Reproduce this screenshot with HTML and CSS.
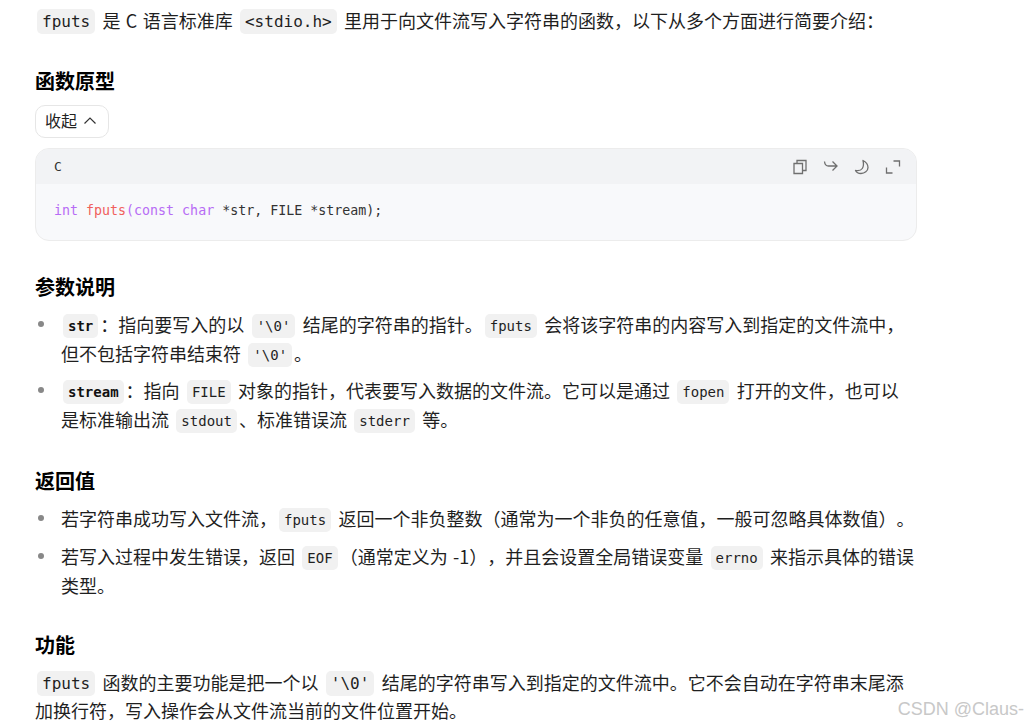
FILE: index.html
```html
<!DOCTYPE html>
<html lang="zh">
<head>
<meta charset="utf-8">
<title>fputs</title>
<link rel="stylesheet" href="styles.css">
</head>
<body>
<main class="doc">
<p class="para"><code>fputs</code> 是 C 语言标准库 <code>&lt;stdio.h&gt;</code> 里用于向文件流写入字符串的函数，以下从多个方面进行简要介绍：</p>
<h2 class="head">函数原型</h2>
<button class="collapse">收起<svg class="chev" viewBox="0 0 14 14" width="14" height="14"><path d="M1.500 9.500 7 4l5.500 5.500" fill="none" stroke="#333" stroke-width="1.200"/></svg></button>
<section class="codeblock">
<div class="codebar">
<span class="lang">C</span>
<div class="tools">
<svg viewBox="0 0 16 16" width="16" height="16"><path d="M2 4.500h8.500v10H2z M5 4.500V1.500h9v10h-3.500" fill="none" stroke="#6f6f6f" stroke-width="1.300"/></svg>
<svg viewBox="0 0 16 16" width="16" height="16"><path d="M1.500 2.500c.3 3 1.700 4.500 4 4.500h8.500M9.500 2.500 14 7l-4.500 4.500" fill="none" stroke="#6f6f6f" stroke-width="1.300"/></svg>
<svg viewBox="0 0 16 16" width="16" height="16"><path d="M9 1.500c3 1.500 5 4.500 5 7 0 3.500-3.500 6-7 6-2.500 0-4.500-1-5.500-3 3 .5 5.500 0 6.800-2C9.700 7.500 9.700 4.500 9 1.500z" fill="none" stroke="#6f6f6f" stroke-width="1.300" stroke-linejoin="round"/></svg>
<svg viewBox="0 0 16 16" width="16" height="16"><path d="M8.500 2h6v5.500M1.500 8.500V14h6" fill="none" stroke="#6f6f6f" stroke-width="1.300"/></svg>
</div>
</div>
<pre class="codebody"><span class="kw">int</span> <span class="fn">fputs</span><span class="kw">(const char</span> *str, FILE *stream);</pre>
</section>
<h2 class="head">参数说明</h2>
<ul class="list params">
<li><code class="strong">str</code>：指向要写入的以 <code>'\0'</code> 结尾的字符串的指针。<code>fputs</code> 会将该字符串的内容写入到指定的文件流中，但不包括字符串结束符 <code>'\0'</code>。</li>
<li><code class="strong">stream</code>：指向 <code>FILE</code> 对象的指针，代表要写入数据的文件流。它可以是通过 <code>fopen</code> 打开的文件，也可以是标准输出流 <code>stdout</code>、标准错误流 <code>stderr</code> 等。</li>
</ul>
<h2 class="head">返回值</h2>
<ul class="list">
<li>若字符串成功写入文件流，<code>fputs</code> 返回一个非负整数（通常为一个非负的任意值，一般可忽略具体数值）。</li>
<li>若写入过程中发生错误，返回 <code>EOF</code>（通常定义为 -1），并且会设置全局错误变量 <code>errno</code> 来指示具体的错误类型。</li>
</ul>
<h2 class="head tail-head">功能</h2>
<p class="para tail"><code>fputs</code> 函数的主要功能是把一个以 <code>'\0'</code> 结尾的字符串写入到指定的文件流中。它不会自动在字符串末尾添加换行符，写入操作会从文件流当前的文件位置开始。</p>
</main>
<div class="watermark">CSDN @Claus-</div>
</body>
</html>
```

FILE: styles.css
```css
html, body {
  margin: 0;
  height: 726px;
  overflow: hidden;
  background: #fff;
}
body {
  font-family: "Noto Sans CJK SC", "Liberation Sans", sans-serif;
  color: #1f1f1f;
  font-size: 18px;
  line-height: 28.800px;
  text-spacing-trim: space-all;
  word-spacing: 1.300px;
}
.doc {
  width: 882px;
  margin-left: 35px;
  padding-top: 6px;
}
.para { margin: 0; }
.tail { line-height: 28px; }
code {
  font-family: "DejaVu Sans Mono", monospace;
  font-size: 16px;
  line-height: 1;
  background: #f1f1f1;
  border-radius: 5px;
  padding: 3px 5px;
  margin: 0 2px;
  vertical-align: 1px;
  word-spacing: 0;
}
.list code {
  font-size: 14px;
  padding: 4px 5px;
}
code.strong { font-weight: 700; color: #111; }
.head {
  font-size: 20px;
  font-weight: 700;
  line-height: 32px;
  color: #000;
  margin: 30px 0 7px;
}
.tail-head { margin-top: 29px; }
.collapse {
  display: flex;
  align-items: center;
  gap: 6px;
  height: 33px;
  margin-top: 8px;
  padding: 0 11px 3px 9px;
  background: #fff;
  border: 1px solid #e6e6e6;
  border-radius: 10px;
  font: 16px "Noto Sans CJK SC", sans-serif;
  color: #222;
}
.chev { margin-top: 3px; }
.codeblock {
  margin-top: 10px;
  background: #f8f9fb;
  border: 1px solid #ececec;
  border-radius: 14px;
  overflow: hidden;
}
.codebar {
  height: 35px;
  background: #f2f3f5;
  display: flex;
  align-items: center;
  justify-content: space-between;
  padding: 1px 15px 0 18px;
  box-sizing: border-box;
}
.lang {
  font-family: "DejaVu Sans Mono", monospace;
  font-size: 13px;
  padding-top: 2px;
  color: #333;
}
.tools { display: flex; gap: 15px; }
.codebody {
  margin: 0;
  height: 56px;
  padding: 0 18px;
  font-family: "DejaVu Sans Mono", monospace;
  font-size: 13.300px;
  line-height: 54px;
  word-spacing: 0;
  color: #333;
}
.kw { color: #b76cf5; }
.fn { color: #f0605c; }
.list {
  margin: 0;
  padding: 0 2px 0 26px;
  list-style: none;
}
.params { margin-bottom: 31.500px; }
.list li {
  position: relative;
  margin-bottom: 9px;
}
.list li:last-child { margin-bottom: 0; }
.list li::before {
  content: "";
  position: absolute;
  left: -23px;
  top: 11px;
  width: 6px;
  height: 6px;
  border-radius: 50%;
  background: #888;
}
.watermark {
  position: absolute;
  right: 4px;
  bottom: 5px;
  font: 18px/24px "Liberation Sans", sans-serif;
  word-spacing: 0;
  color: #c8c8c8;
}
```
